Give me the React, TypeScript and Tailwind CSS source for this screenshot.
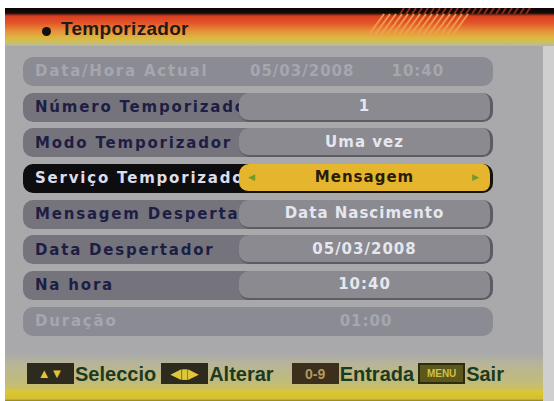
import React from "react"

type RowState = "normal" | "disabled" | "selected"

type Row = {
  label: string
  value: React.ReactNode
  state: RowState
}

const rows: Row[] = [
  {
    label: "Data/Hora Actual",
    value: (
      <div className="flex items-center gap-[37px] pl-[11px] w-full">
        <span>05/03/2008</span>
        <span>10:40</span>
      </div>
    ),
    state: "disabled",
  },
  { label: "Número Temporizador", value: "1", state: "normal" },
  { label: "Modo Temporizador", value: "Uma vez", state: "normal" },
  { label: "Serviço Temporizador", value: "Mensagem", state: "selected" },
  { label: "Mensagem Despertador", value: "Data Nascimento", state: "normal" },
  { label: "Data Despertador", value: "05/03/2008", state: "normal" },
  { label: "Na hora", value: "10:40", state: "normal" },
  { label: "Duração", value: "01:00", state: "disabled" },
]

function MenuRow({ row }: { row: Row }) {
  const labelCls =
    row.state === "selected"
      ? "bg-[#0d0d0f] text-[#dedcec]"
      : row.state === "disabled"
        ? "bg-[#8b8b93] text-[#a6a6b0]"
        : "bg-[#75747c] text-[#1e1e44]"

  const valueCls =
    row.state === "selected"
      ? "bg-[#e5b52e] text-[#2a1c08] border-[#15100a] border-r-[3px] border-b-[2px]"
      : row.state === "disabled"
        ? "bg-[#8b8b93] text-[#a6a6b0]"
        : "bg-[#8a8a90] text-[#e6e6ee] border-[#5c5c64] border-r-[3px] border-b-[2px]"

  return (
    <div className="flex h-[29px] w-[470px]">
      <div
        className={`flex-none w-[232px] h-full rounded-l-[10px] overflow-hidden whitespace-nowrap flex items-center pl-[12px] text-[15px] font-bold tracking-[1.8px] ${labelCls}`}
      >
        {row.label}
      </div>
      <div
        className={`relative -ml-[16px] flex-none w-[254px] h-full rounded-[10px] flex items-center justify-center whitespace-nowrap text-[15px] font-bold tracking-[1px] ${valueCls}`}
      >
        {row.state === "selected" && (
          <span className="absolute left-[9px] text-[9px] text-[#6f9a2c]">◀</span>
        )}
        {row.value}
        {row.state === "selected" && (
          <span className="absolute right-[10px] text-[9px] text-[#6f9a2c]">▶</span>
        )}
      </div>
    </div>
  )
}

function KeyBox({ children, className }: { children: React.ReactNode; className: string }) {
  return (
    <div
      className={`flex-none w-[47px] h-[21px] flex items-center justify-center font-bold leading-none ${className}`}
    >
      {children}
    </div>
  )
}

export default function App() {
  return (
    <div
      className="w-[554px] h-[401px] bg-white flex flex-col pt-[8px] pl-[5px] overflow-hidden"
      style={{ fontFamily: '"DejaVu Sans", sans-serif' }}
    >
      {/* Header */}
      <div className="relative flex-none h-[38px] flex items-center pl-[37px] bg-[linear-gradient(to_bottom,#0a0604_0px,#160a06_5px,#d63e20_8px,#e4552a_15px,#e8903a_23px,#dcb840_30px,#c8c068_35px,#b4b4aa_38px)]">
        <svg className="absolute left-[355px] top-0" width="175" height="30" viewBox="0 0 175 30">
          {Array.from({ length: 22 }).map((_, i) => (
            <line
              key={"r" + i}
              x1={44 + i * 6}
              y1={0}
              x2={40 + i * 6}
              y2={6}
              stroke="#8a2a1a"
              strokeWidth="2"
            />
          ))}
          {Array.from({ length: 15 }).map((_, i) => (
            <line
              key={"o" + i}
              x1={24 + i * 6}
              y1={6}
              x2={8 + i * 6}
              y2={28}
              stroke="#f0a24a"
              strokeWidth="2"
              opacity="0.9"
            />
          ))}
        </svg>
        <div className="w-[9px] h-[9px] rounded-full bg-[#121010] mt-[8px]" />
        <span
          className="ml-[10px] mt-[4px] text-[19px] font-bold tracking-[0.3px] text-[#231a14]"
          style={{ fontFamily: '"Liberation Sans", sans-serif' }}
        >
          Temporizador
        </span>
      </div>

      {/* Body */}
      <div className="flex-1 flex">
        <div className="w-[538px] flex flex-col bg-[#a9a9ac]">
          <div className="flex flex-col gap-[6.7px] pl-[18px] pt-[11px]">
            {rows.map((r) => (
              <MenuRow key={r.label} row={r} />
            ))}
          </div>

          {/* Footer */}
          <div
            className="mt-auto h-[48px] flex items-start pl-[22px] pt-[10px] bg-[linear-gradient(to_bottom,#a9a9ac_0px,#b6b49a_10px,#c2bc78_30px,#cbc060_36px,#dcc832_38px,#d4c030_46px,#8a7e20_48px)] text-[20px] font-bold text-[#1d3a20]"
            style={{ fontFamily: '"Liberation Sans", sans-serif' }}
          >
            <div className="flex items-center h-[21px]">
              <KeyBox className="bg-[#2c2b1e] text-[#e2c43a] text-[13px]">▲▼</KeyBox>
              <span className="ml-[1px]">Seleccio</span>
              <KeyBox className="ml-[5px] bg-[#2c2b1e] text-[#e2c43a] text-[13px]">◀▮▶</KeyBox>
              <span className="ml-[1px]">Alterar</span>
              <KeyBox className="ml-[18px] bg-[#3c301c] text-[#b09a60] text-[14px]">0-9</KeyBox>
              <span className="ml-[1px]">Entrada</span>
              <KeyBox className="ml-[4px] bg-[#5c581c] border-2 border-[#2e2c10] text-[#d0c048] text-[10px]">MENU</KeyBox>
              <span className="ml-[1px]">Sair</span>
            </div>
          </div>
        </div>
        <div className="flex-1 bg-[#cfcfcf]" />
      </div>
    </div>
  )
}
